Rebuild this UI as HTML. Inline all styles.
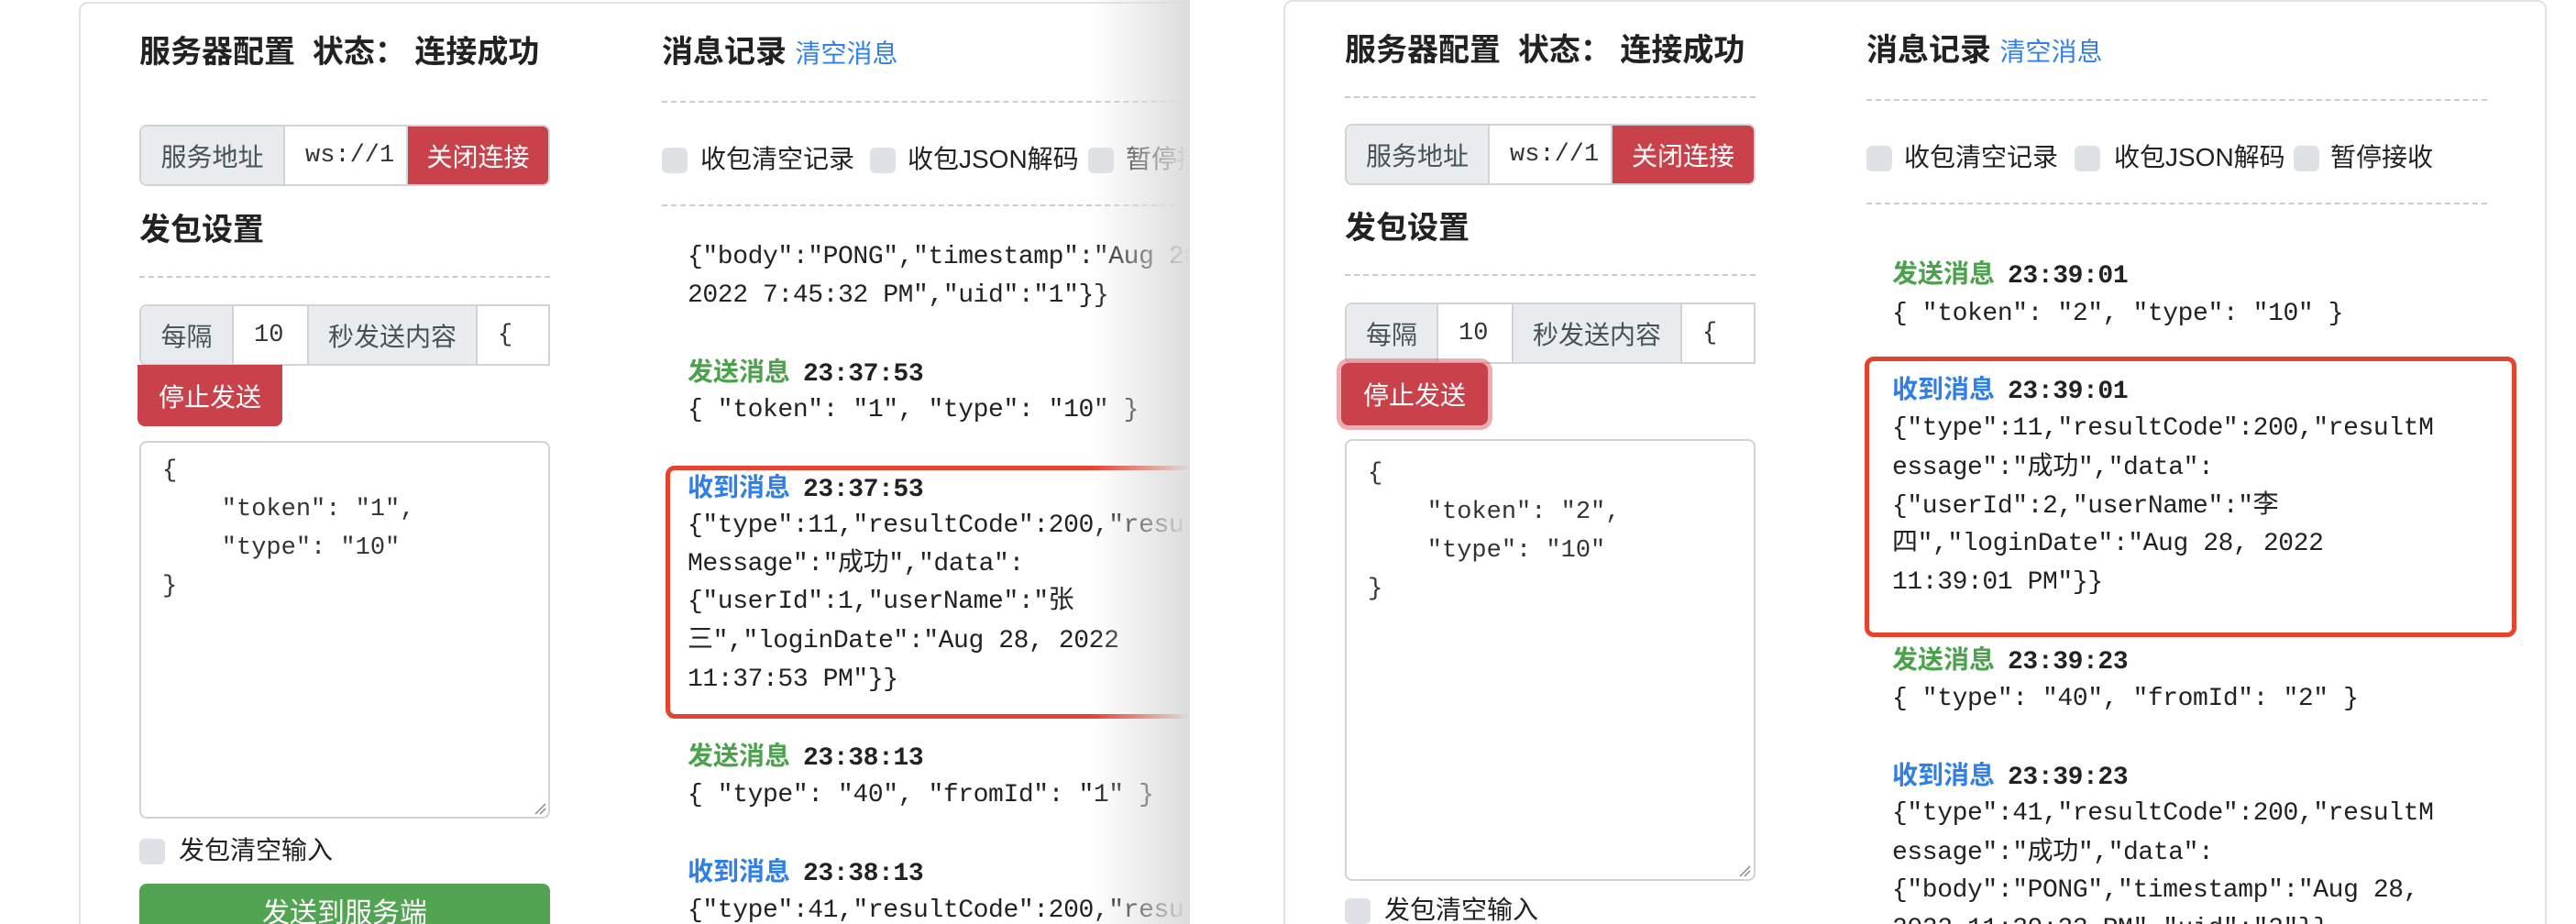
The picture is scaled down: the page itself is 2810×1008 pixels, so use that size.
<!DOCTYPE html>
<html><head><meta charset="utf-8"><style>
*{box-sizing:border-box;margin:0;padding:0}
html,body{width:2810px;height:1008px;overflow:hidden;background:#fff}
body{position:relative;font-family:"Liberation Sans","Noto Sans CJK SC",sans-serif;color:#222}
#wrap{position:absolute;left:0;top:0;width:2810px;height:1008px;overflow:hidden}
.a{position:absolute;white-space:nowrap}
.h{font-size:34px;font-weight:bold;color:#222;line-height:40px}
.dash{position:absolute;height:0;border-top:2px dashed #ccc}
.grp{position:absolute;height:67px;border:2px solid #d0d4d9;border-radius:8px;overflow:hidden;display:flex;font-size:28px}
.grp>div{height:100%;display:flex;align-items:center;justify-content:center}
.ad{background:#e9ecef;color:#495057;border-right:2px solid #d0d4d9}
.in{background:#fff;color:#333;font-family:"Liberation Mono",monospace;font-size:27px;justify-content:flex-start!important;padding-left:22px;border-right:2px solid #d0d4d9;overflow:hidden}
.red{background:#c9424b;color:#fff}
.cb{position:absolute;width:28px;height:28px;background:#dee1e6;border-radius:6px}
.lbl{font-size:28px;color:#222;line-height:40px}
.m{position:absolute;white-space:nowrap;font-family:"Liberation Mono","Noto Sans CJK SC",monospace;font-size:28px;line-height:42px;height:42px;color:#222;letter-spacing:-0.4px}
.g{font-family:"Liberation Sans","Noto Sans CJK SC",sans-serif;font-weight:bold;color:#4ca24c;letter-spacing:0}
.b{font-family:"Liberation Sans","Noto Sans CJK SC",sans-serif;font-weight:bold;color:#2f7fe6;letter-spacing:0}
.t{font-weight:bold;margin-left:14px}
.ta{position:absolute;border:2px solid #d0d4d9;border-radius:8px;background:#fff}
.tl{position:absolute;font-family:"Liberation Mono",monospace;font-size:27px;color:#333;line-height:42px;white-space:pre}
.box{position:absolute;border:5px solid #e6432e;border-radius:10px}
</style></head><body><div id="wrap">

<!-- LEFT (clipped) -->
<div style="position:absolute;left:0;top:0;width:1298px;height:1008px;overflow:hidden">
 <div style="position:absolute;left:86px;top:2px;width:1400px;height:1030px;border:2px solid #e2e2e2;border-radius:10px"></div>
 <div class="a h" style="left:152px;top:37px">服务器配置&nbsp; 状态： 连接成功</div>
 <div class="dash" style="left:152px;top:149px;width:448px"></div>
 <div class="grp" style="left:152px;top:136px;width:448px"><div class="ad" style="width:157px">服务地址</div><div class="in" style="width:134px">ws://1</div><div class="red" style="flex:1">关闭连接</div></div>
 <div class="a h" style="left:152px;top:231px">发包设置</div>
 <div class="dash" style="left:152px;top:301px;width:448px"></div>
 <div class="grp" style="left:152px;top:332px;width:448px;border-radius:8px 0 0 8px"><div class="ad" style="width:101px">每隔</div><div class="in" style="width:82px;padding-left:22px">10</div><div class="ad" style="width:184px">秒发送内容</div><div class="in" style="flex:1;border:0">{</div></div>
 <div class="a red" style="left:150px;top:398px;width:158px;height:67px;border-radius:0 0 8px 8px;font-size:28px;display:flex;align-items:center;justify-content:center">停止发送</div>
 <div class="ta" style="left:152px;top:481px;width:448px;height:412px"></div>
 <div class="tl" style="left:177px;top:493px">{
    "token": "1",
    "type": "10"
}</div>
 <svg class="a" style="left:582px;top:875px" width="14" height="14"><path d="M2 13L13 2M7 13L13 7" stroke="#888" stroke-width="1.5"/></svg>
 <div class="cb" style="left:152px;top:915px"></div>
 <div class="a lbl" style="left:195px;top:908px">发包清空输入</div>
 <div class="a" style="left:152px;top:964px;width:448px;height:44px;background:#52a352;border-radius:8px 8px 0 0;color:#fff;font-size:30px;text-align:center;line-height:66px;overflow:hidden">发送到服务端</div>

 <div class="a h" style="left:722px;top:37px">消息记录 <span style="font-weight:normal;color:#2f80ed;font-size:28px">清空消息</span></div>
 <div class="dash" style="left:722px;top:110px;width:600px"></div>
 <div class="cb" style="left:722px;top:161px"></div><div class="a lbl" style="left:764px;top:154px">收包清空记录</div>
 <div class="cb" style="left:949px;top:161px"></div><div class="a lbl" style="left:990px;top:154px">收包JSON解码</div>
 <div class="cb" style="left:1187px;top:161px"></div><div class="a lbl" style="left:1228px;top:154px">暂停接收</div>
 <div class="dash" style="left:722px;top:223px;width:600px"></div>

 <div class="m" style="left:750px;top:260px">{"body":"PONG","timestamp":"Aug 28,</div>
 <div class="m" style="left:750px;top:302px">2022 7:45:32 PM","uid":"1"}}</div>
 <div class="m" style="left:750px;top:385px"><span class="g">发送消息</span><span class="t">23:37:53</span></div>
 <div class="m" style="left:750px;top:427px">{ "token": "1", "type": "10" }</div>
 <div class="box" style="left:726px;top:508px;width:600px;height:276px"></div>
 <div class="m" style="left:750px;top:511px"><span class="b">收到消息</span><span class="t">23:37:53</span></div>
 <div class="m" style="left:750px;top:553px">{"type":11,"resultCode":200,"result</div>
 <div class="m" style="left:750px;top:595px">Message":"成功","data":</div>
 <div class="m" style="left:750px;top:636px">{"userId":1,"userName":"张</div>
 <div class="m" style="left:750px;top:679px">三","loginDate":"Aug 28, 2022</div>
 <div class="m" style="left:750px;top:721px">11:37:53 PM"}}</div>
 <div class="m" style="left:750px;top:804px"><span class="g">发送消息</span><span class="t">23:38:13</span></div>
 <div class="m" style="left:750px;top:847px">{ "type": "40", "fromId": "1" }</div>
 <div class="m" style="left:750px;top:930px"><span class="b">收到消息</span><span class="t">23:38:13</span></div>
 <div class="m" style="left:750px;top:973px">{"type":41,"resultCode":200,"result</div>
 <div class="a" style="left:1190px;top:0;width:108px;height:1008px;background:linear-gradient(to right,rgba(235,235,235,0),#dcdcdc)"></div>
</div>

<!-- RIGHT -->
<div class="a" style="left:1400px;top:0;width:1378px;height:1030px;border:2px solid #e2e2e2;border-radius:10px"></div>
<div class="a h" style="left:1467px;top:35px">服务器配置&nbsp; 状态： 连接成功</div>
<div class="dash" style="left:1467px;top:105px;width:448px"></div>
<div class="grp" style="left:1467px;top:135px;width:448px"><div class="ad" style="width:156px">服务地址</div><div class="in" style="width:134px">ws://1</div><div class="red" style="flex:1">关闭连接</div></div>
<div class="a h" style="left:1467px;top:229px">发包设置</div>
<div class="dash" style="left:1467px;top:299px;width:448px"></div>
<div class="grp" style="left:1467px;top:330px;width:448px;border-radius:8px 0 0 8px"><div class="ad" style="width:100px">每隔</div><div class="in" style="width:82px">10</div><div class="ad" style="width:184px">秒发送内容</div><div class="in" style="flex:1;border:0">{</div></div>
<div class="a red" style="left:1463px;top:396px;width:160px;height:68px;border-radius:8px;font-size:28px;display:flex;align-items:center;justify-content:center;box-shadow:0 0 0 5px rgba(220,90,100,.5)">停止发送</div>
<div class="ta" style="left:1467px;top:479px;width:448px;height:482px"></div>
<div class="tl" style="left:1492px;top:496px">{
    "token": "2",
    "type": "10"
}</div>
<svg class="a" style="left:1896px;top:943px" width="14" height="14"><path d="M2 13L13 2M7 13L13 7" stroke="#888" stroke-width="1.5"/></svg>
<div class="cb" style="left:1467px;top:980px"></div>
<div class="a lbl" style="left:1510px;top:973px">发包清空输入</div>

<div class="a h" style="left:2036px;top:35px">消息记录 <span style="font-weight:normal;color:#2f80ed;font-size:28px">清空消息</span></div>
<div class="dash" style="left:2036px;top:108px;width:677px"></div>
<div class="cb" style="left:2036px;top:159px"></div><div class="a lbl" style="left:2077px;top:152px">收包清空记录</div>
<div class="cb" style="left:2263px;top:159px"></div><div class="a lbl" style="left:2306px;top:152px">收包JSON解码</div>
<div class="cb" style="left:2502px;top:159px"></div><div class="a lbl" style="left:2542px;top:152px">暂停接收</div>
<div class="dash" style="left:2036px;top:221px;width:677px"></div>

<div class="m" style="left:2064px;top:278px"><span class="g">发送消息</span><span class="t">23:39:01</span></div>
<div class="m" style="left:2064px;top:322px">{ "token": "2", "type": "10" }</div>
<div class="box" style="left:2034px;top:389px;width:711px;height:306px"></div>
<div class="m" style="left:2064px;top:404px"><span class="b">收到消息</span><span class="t">23:39:01</span></div>
<div class="m" style="left:2064px;top:447px">{"type":11,"resultCode":200,"resultM</div>
<div class="m" style="left:2064px;top:490px">essage":"成功","data":</div>
<div class="m" style="left:2064px;top:532px">{"userId":2,"userName":"李</div>
<div class="m" style="left:2064px;top:573px">四","loginDate":"Aug 28, 2022</div>
<div class="m" style="left:2064px;top:615px">11:39:01 PM"}}</div>
<div class="m" style="left:2064px;top:699px"><span class="g">发送消息</span><span class="t">23:39:23</span></div>
<div class="m" style="left:2064px;top:742px">{ "type": "40", "fromId": "2" }</div>
<div class="m" style="left:2064px;top:825px"><span class="b">收到消息</span><span class="t">23:39:23</span></div>
<div class="m" style="left:2064px;top:867px">{"type":41,"resultCode":200,"resultM</div>
<div class="m" style="left:2064px;top:910px">essage":"成功","data":</div>
<div class="m" style="left:2064px;top:951px">{"body":"PONG","timestamp":"Aug 28,</div>
<div class="m" style="left:2064px;top:993px">2022 11:39:23 PM","uid":"2"}}</div>
</div></body></html>
